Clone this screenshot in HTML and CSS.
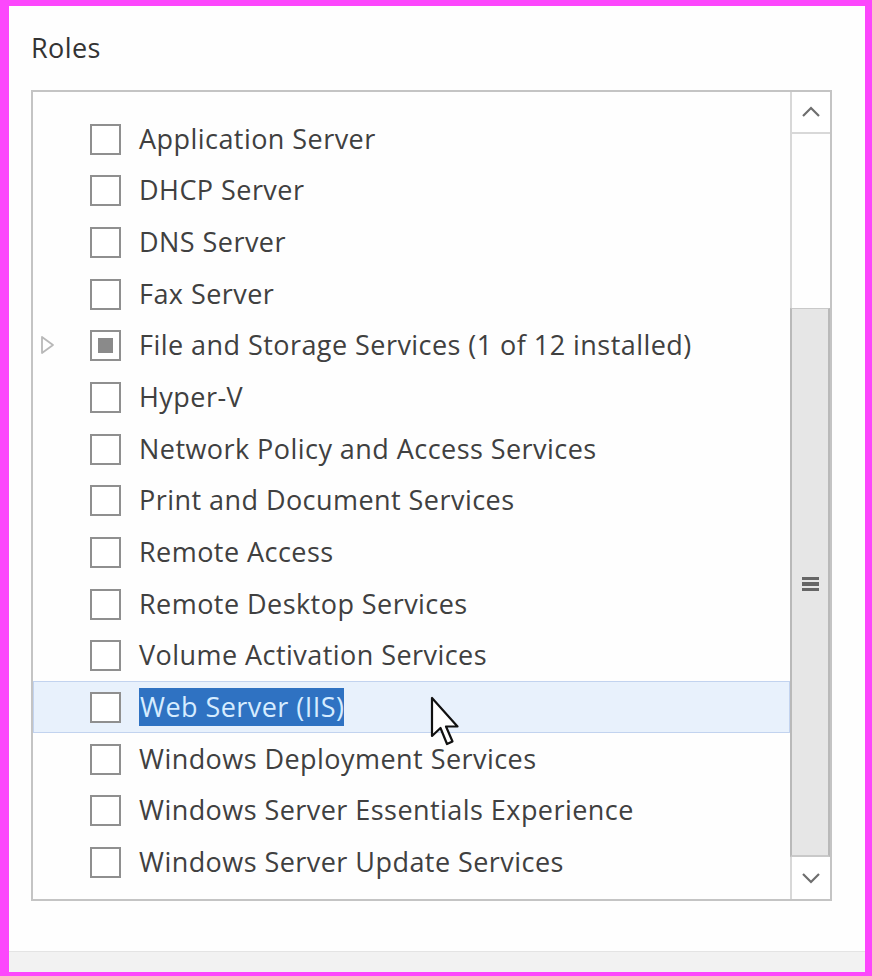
FILE: index.html
```html
<!DOCTYPE html>
<html>
<head>
<meta charset="utf-8">
<link rel="stylesheet" href="styles.css">
</head>
<body>
<div class="frame">
  <div class="panel">
    <h1 class="title">Roles</h1>
    <div class="listbox">
      <ul class="list">
        <li class="row"><span class="exp"></span><span class="cb"></span><span class="label">Application Server</span></li>
        <li class="row"><span class="exp"></span><span class="cb"></span><span class="label">DHCP Server</span></li>
        <li class="row"><span class="exp"></span><span class="cb"></span><span class="label">DNS Server</span></li>
        <li class="row"><span class="exp"></span><span class="cb"></span><span class="label">Fax Server</span></li>
        <li class="row"><span class="exp"><svg width="16" height="20" viewBox="0 0 16 20"><path d="M2 2 L13 10 L2 18 Z" fill="none" stroke="#b8b8b8" stroke-width="1.8" stroke-linejoin="round"/></svg></span><span class="cb partial"><span class="fill"></span></span><span class="label">File and Storage Services (1 of 12 installed)</span></li>
        <li class="row"><span class="exp"></span><span class="cb"></span><span class="label">Hyper-V</span></li>
        <li class="row"><span class="exp"></span><span class="cb"></span><span class="label">Network Policy and Access Services</span></li>
        <li class="row"><span class="exp"></span><span class="cb"></span><span class="label">Print and Document Services</span></li>
        <li class="row"><span class="exp"></span><span class="cb"></span><span class="label">Remote Access</span></li>
        <li class="row"><span class="exp"></span><span class="cb"></span><span class="label">Remote Desktop Services</span></li>
        <li class="row"><span class="exp"></span><span class="cb"></span><span class="label">Volume Activation Services</span></li>
        <li class="row selected"><span class="exp"></span><span class="cb"></span><span class="label"><span class="sel">Web Server (IIS)</span></span>
          <svg class="cursor" width="34" height="56" viewBox="0 0 34 56"><path d="M3 2 L3 40 L11.5 32 L18 48 L23.5 45.5 L17 30.5 L28.5 30.5 Z" fill="#fff" stroke="#111" stroke-width="2.2" stroke-linejoin="round"/></svg>
        </li>
        <li class="row"><span class="exp"></span><span class="cb"></span><span class="label">Windows Deployment Services</span></li>
        <li class="row"><span class="exp"></span><span class="cb"></span><span class="label">Windows Server Essentials Experience</span></li>
        <li class="row"><span class="exp"></span><span class="cb"></span><span class="label">Windows Server Update Services</span></li>
      </ul>
      <div class="scrollbar">
        <div class="sbtn up"><svg width="20" height="12" viewBox="0 0 20 12"><path d="M2 10 L10 2 L18 10" fill="none" stroke="#6e6e6e" stroke-width="2.2"/></svg></div>
        <div class="track"></div>
        <div class="thumb"><span class="grip"></span></div>
        <div class="sbtn down"><svg width="20" height="12" viewBox="0 0 20 12"><path d="M2 2 L10 10 L18 2" fill="none" stroke="#6e6e6e" stroke-width="2.2"/></svg></div>
      </div>
    </div>
    <div class="spacer"></div>
    <div class="footer"></div>
  </div>
</div>
</body>
</html>
```
FILE: styles.css
```css
html, body {
  margin: 0;
  padding: 0;
  background: #fc47fc;
}
.frame {
  width: 872px;
  height: 976px;
  box-sizing: border-box;
  border-style: solid;
  border-color: #fc47fc;
  border-width: 6px 7px 4px 9px;
}
.panel {
  background: #fefefe;
  height: 100%;
  display: flex;
  flex-direction: column;
  font-family: "Open Sans", "Noto Sans", sans-serif;
  color: #3a3a3a;
}
.title {
  margin: 0;
  padding: 27px 0 0 22px;
  height: 84px;
  box-sizing: border-box;
  font-size: 27px;
  font-weight: 400;
  line-height: 30px;
  color: #333;
  letter-spacing: 0.4px;
}
.listbox {
  margin-left: 22px;
  width: 801px;
  height: 811px;
  box-sizing: border-box;
  border: 2px solid #c4c4c4;
  display: flex;
}
.list {
  list-style: none;
  margin: 0;
  padding: 21px 0 0 0;
  width: 757px;
}
.row {
  position: relative;
  height: 51.65px;
  box-sizing: border-box;
  display: flex;
  align-items: center;
  border: 1px solid transparent;
}
.row.selected {
  background: #e8f1fc;
  border-color: #c2d3ef;
}
.exp {
  width: 56px;
  display: flex;
  align-items: center;
  padding-left: 6px;
  box-sizing: border-box;
}
.cb {
  width: 31px;
  height: 31px;
  box-sizing: border-box;
  border: 2px solid #8f8f8f;
  background: #fff;
  display: flex;
  align-items: center;
  justify-content: center;
  margin-right: 18px;
  margin-top: 1px;
}
.cb .fill {
  width: 15px;
  height: 15px;
  background: #8a8a8a;
}
.label {
  font-size: 27px;
  line-height: 38px;
  color: #404040;
  letter-spacing: 0.45px;
  white-space: nowrap;
}
.sel {
  background: #2f72c2;
  color: #d6ecff;
  padding: 0 0 1px 1px;
}
.cursor {
  position: absolute;
  left: 395px;
  top: 14px;
}
.scrollbar {
  width: 40px;
  margin-left: auto;
  display: flex;
  flex-direction: column;
}
.sbtn {
  height: 42px;
  box-sizing: border-box;
  border-left: 2px solid #d8d8d8;
  display: flex;
  align-items: center;
  justify-content: center;
  background: #fff;
}
.sbtn.up {
  border-bottom: 2px solid #d8d8d8;
}
.track {
  height: 174px;
  border-left: 2px solid #d8d8d8;
}
.thumb {
  flex: 1;
  background: #e6e6e6;
  border-left: 2px solid #b9b9b9;
  border-right: 2px solid #b9b9b9;
  border-top: 1px solid #c9c9c9;
  border-bottom: 2px solid #c9c9c9;
  display: flex;
  align-items: center;
  justify-content: center;
}
.grip {
  width: 17px;
  height: 14px;
  background: repeating-linear-gradient(#666 0 3px, transparent 3px 5.5px);
  margin-top: 4px;
}
.spacer {
  flex: 1;
}
.footer {
  height: 20px;
  background: #f2f2f2;
  border-top: 1px solid #e4e4e4;
}
```
